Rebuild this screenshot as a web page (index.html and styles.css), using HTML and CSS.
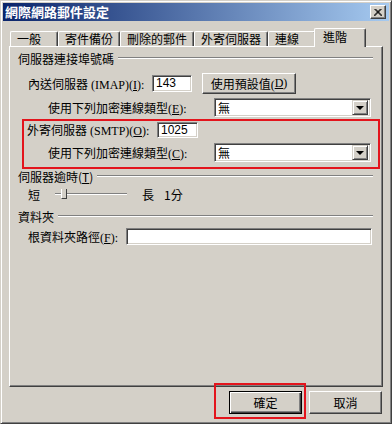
FILE: index.html
```html
<!DOCTYPE html>
<html lang="zh-Hant">
<head>
  <meta charset="UTF-8">
  <title>網際網路郵件設定</title>
  <link rel="stylesheet" href="styles.css">
</head>
<body>
  <div class="window">
    <div class="titlebar">
      <span class="title">網際網路郵件設定</span>
      <span class="close-btn">
        <svg width="8" height="7" viewBox="0 0 8 7"><path d="M0.5 0 L7.5 7 M1.5 0 L8.5 7 M7.5 0 L0.5 7 M6.5 0 L-0.5 7" stroke="#000" stroke-width="1"/></svg>
      </span>
    </div>

    <div class="dialog">
      <div class="tabs">
        <div class="tab">一般</div>
        <div class="tab">寄件備份</div>
        <div class="tab">刪除的郵件</div>
        <div class="tab">外寄伺服器</div>
        <div class="tab">連線</div>
        <div class="tab active">進階</div>
      </div>

      <div class="panel">
        <div class="group"><span>伺服器連接埠號碼</span><span class="rule"></span></div>

        <div class="row row-imap">
          <span class="lbl lbl-imap">內送伺服器 (IMAP)(<u>I</u>):</span>
          <div class="field port">143</div>
          <div class="btn btn-defaults">使用預設值(<u>D</u>)</div>
        </div>

        <div class="row row-enc">
          <span class="lbl lbl-enc">使用下列加密連線類型(<u>E</u>):</span>
          <div class="combo"><span class="combo-text">無</span><span class="combo-arrow"></span></div>
        </div>

        <div class="highlight">
          <div class="row row-smtp">
            <span class="lbl lbl-smtp">外寄伺服器 (SMTP)(<u>O</u>):</span>
            <div class="field port port-smtp">1025</div>
          </div>
          <div class="row row-enc row-enc-smtp">
            <span class="lbl lbl-enc">使用下列加密連線類型(<u>C</u>):</span>
            <div class="combo"><span class="combo-text">無</span><span class="combo-arrow"></span></div>
          </div>
        </div>

        <div class="group group-tight"><span>伺服器逾時(<u>T</u>)</span><span class="rule"></span></div>

        <div class="row row-slider">
          <span>短</span>
          <div class="slider"><span class="track"></span><span class="thumb"></span></div>
          <span class="long">長</span>
          <span class="minutes">1分</span>
        </div>

        <div class="group group-folder"><span>資料夾</span><span class="rule"></span></div>

        <div class="row row-folder">
          <span class="lbl lbl-folder">根資料夾路徑(<u>F</u>):</span>
          <div class="field path"></div>
        </div>
      </div>

      <div class="actions">
        <div class="btn btn-action btn-ok">確定</div>
        <div class="btn btn-action">取消</div>
      </div>
    </div>
  </div>
</body>
</html>
```

FILE: styles.css
```css
body {
  margin: 0;
  font-family: "Liberation Serif", "Noto Sans CJK TC", serif;
  font-size: 12px;
  color: #000;
  background: #d4d0c8;
}
u {
  text-decoration: underline;
}
.window {
  width: 392px;
  height: 424px;
  box-sizing: border-box;
  background: #d4d0c8;
  border: 1px solid;
  border-color: #d4d0c8 #404040 #404040 #d4d0c8;
  padding: 2px;
  box-shadow: inset 1px 1px #fff, inset -1px -1px #808080;
}
.titlebar {
  height: 18px;
  display: flex;
  align-items: center;
  justify-content: space-between;
  background: linear-gradient(to right, #0a246a, #a6caf0);
  padding: 0 3px 0 2px;
}
.title {
  color: #fff;
  font-family: "Noto Sans CJK TC", sans-serif;
  font-weight: bold;
  font-size: 13px;
  line-height: 18px;
}
.close-btn {
  width: 16px;
  height: 14px;
  box-sizing: border-box;
  display: flex;
  align-items: center;
  justify-content: center;
  background: #d4d0c8;
  border: 1px solid;
  border-color: #fff #404040 #404040 #fff;
  box-shadow: inset -1px -1px #808080;
}
.dialog {
  padding: 0 6px;
}
.tabs {
  display: flex;
  align-items: flex-end;
  height: 18px;
  margin-top: 7px;
  padding-left: 1px;
}
.tab {
  height: 15px;
  min-width: 48px;
  box-sizing: border-box;
  padding: 0 6px;
  line-height: 14px;
  font-family: "Noto Sans CJK TC", sans-serif;
  border-top: 1px solid #fff;
  border-left: 1px solid #fff;
  border-right: 1px solid #404040;
  box-shadow: inset -1px 0 #808080;
  border-radius: 2px 2px 0 0;
}
.tab.active {
  position: relative;
  z-index: 1;
  height: 19px;
  min-width: 52px;
  margin: 0 -2px -1px -2px;
  padding: 1px 8px 0;
  background: #d4d0c8;
}
.panel {
  height: 341px;
  box-sizing: border-box;
  border: 1px solid;
  border-color: #fff #404040 #404040 #fff;
  box-shadow: inset -1px -1px #808080;
  padding: 4px 10px 0 8px;
}
.group {
  display: flex;
  align-items: center;
  height: 14px;
  font-family: "Noto Sans CJK TC", sans-serif;
}
.rule {
  flex: 1;
  margin-left: 4px;
  margin-right: -1px;
  border-top: 1px solid #808080;
  border-bottom: 1px solid #fff;
}
.group-folder {
  margin-top: 8px;
}
.row {
  display: flex;
  align-items: center;
}
.lbl {
  white-space: nowrap;
}
.row-imap {
  height: 21px;
  margin-top: 8px;
  padding-left: 10px;
}
.lbl-imap {
  width: 124px;
}
.field {
  box-sizing: border-box;
  background: #fff;
  border: 1px solid;
  border-color: #808080 #fff #fff #808080;
  box-shadow: inset 1px 1px #404040, inset -1px -1px #d4d0c8;
  padding: 0 3px;
  font-family: "Liberation Sans", sans-serif;
  line-height: 14px;
}
.port {
  width: 40px;
  height: 17px;
}
.btn {
  box-sizing: border-box;
  background: #d4d0c8;
  border: 1px solid;
  border-color: #fff #404040 #404040 #fff;
  box-shadow: inset -1px -1px #808080;
  display: flex;
  align-items: center;
  justify-content: center;
}
.btn-defaults {
  width: 94px;
  height: 21px;
  margin-left: 10px;
}
.row-enc {
  height: 19px;
  margin-top: 4px;
  padding-left: 30px;
}
.lbl-enc {
  width: 166px;
}
.combo {
  width: 157px;
  height: 19px;
  box-sizing: border-box;
  background: #fff;
  border: 1px solid;
  border-color: #808080 #fff #fff #808080;
  box-shadow: inset 1px 1px #404040, inset -1px -1px #d4d0c8;
  display: flex;
  align-items: center;
  padding: 2px;
}
.combo-text {
  flex: 1;
  font-family: "Noto Sans CJK TC", sans-serif;
  padding-left: 1px;
}
.combo-arrow {
  width: 16px;
  height: 15px;
  box-sizing: border-box;
  background: #d4d0c8;
  border: 1px solid;
  border-color: #d4d0c8 #404040 #404040 #d4d0c8;
  box-shadow: inset 1px 1px #fff, inset -1px -1px #808080;
  display: flex;
  align-items: center;
  justify-content: center;
}
.combo-arrow::after {
  content: "";
  border-left: 4px solid transparent;
  border-right: 4px solid transparent;
  border-top: 4px solid #000;
  margin-top: 1px;
}
.highlight {
  margin: 2px -8px 0 4px;
  border: 2px solid #e3141c;
  padding: 1px 0 5px 3px;
}
.row-smtp {
  height: 16px;
}
.lbl-smtp {
  width: 130px;
}
.port-smtp {
  width: 41px;
  height: 16px;
}
.row-enc-smtp {
  margin-top: 5px;
  padding-left: 21px;
}
.row-slider {
  height: 14px;
  margin-top: 4px;
  padding-left: 10px;
  font-family: "Noto Sans CJK TC", sans-serif;
}
.slider {
  position: relative;
  width: 72px;
  height: 12px;
  margin-left: 15px;
  display: flex;
  align-items: center;
}
.track {
  flex: 1;
  height: 2px;
  border-top: 1px solid #808080;
  border-bottom: 1px solid #fff;
  box-sizing: border-box;
}
.thumb {
  position: absolute;
  left: 6px;
  top: 1px;
  width: 4px;
  height: 9px;
  background: #d4d0c8;
  border-left: 1px solid #fff;
  border-right: 1px solid #404040;
  border-bottom: 1px solid #404040;
}
.long {
  margin-left: 15px;
}
.minutes {
  margin-left: 10px;
}
.row-folder {
  height: 17px;
  margin-top: 5px;
  padding-left: 10px;
}
.lbl-folder {
  width: 98px;
}
.path {
  flex: 1;
  height: 17px;
}
.actions {
  display: flex;
  justify-content: flex-end;
  gap: 7px;
  margin-top: 4px;
  padding-right: 1px;
}
.btn-action {
  width: 73px;
  height: 23px;
  font-family: "Noto Sans CJK TC", sans-serif;
}
.btn-ok {
  position: relative;
  border-color: #000;
  box-shadow: inset 1px 1px #fff, inset -1px -1px #404040, inset -2px -2px #808080;
}
.btn-ok::after {
  content: "";
  position: absolute;
  left: -16px;
  top: -9px;
  width: 88px;
  height: 32px;
  border: 2px solid #e3141c;
}
```
